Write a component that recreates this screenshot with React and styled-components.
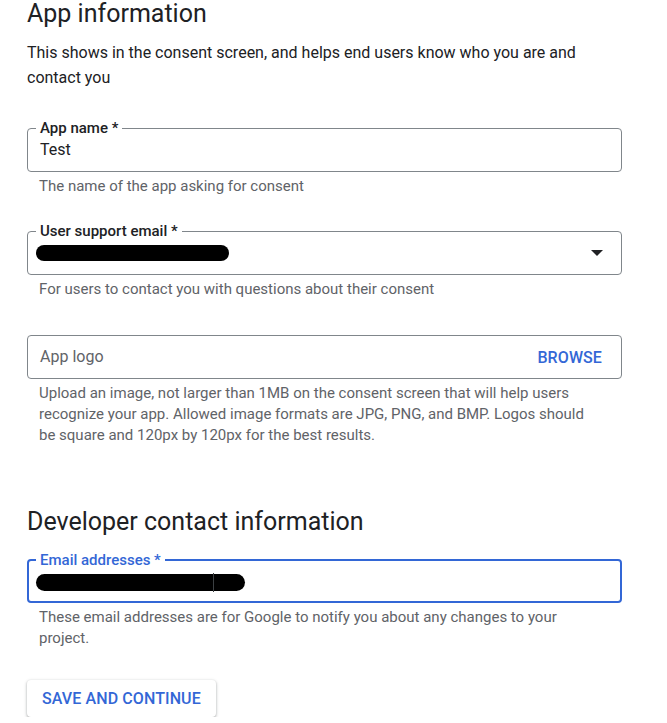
import React from 'react'
import styled, { createGlobalStyle } from 'styled-components'

const GlobalStyle = createGlobalStyle`
  html, body {
    margin: 0;
    padding: 0;
    background: #ffffff;
  }
  body {
    font-family: Roboto, 'Noto Sans', Arial, sans-serif;
    color: #202124;
  }
`;

const Page = styled.div`
  width: 595px;
  padding: 0 0 0 27px;
  display: flex;
  flex-direction: column;
`;

const Heading = styled.h2`
  margin: ${props => props.top || 0}px 0 0;
  font-size: 25px;
  line-height: 28px;
  font-weight: 400;
  color: #202124;
`;

const Intro = styled.p`
  margin: 12px 0 0;
  font-size: 16px;
  line-height: 25px;
  color: #202124;
  padding-right: 30px;
`;

const Field = styled.div`
  display: flex;
  flex-direction: column;
  margin-top: ${props => props.top}px;
`;

const Outline = styled.fieldset`
  margin: 0;
  min-width: 0;
  padding: 0 ${props => props.focused ? 11 : 12}px ${props => props.labeled ? (props.focused ? 5 : 7) : 0}px;
  border: ${props => props.focused ? '2px solid #3367d6' : '1px solid #80868b'};
  border-radius: 4px;
`;

const Label = styled.legend`
  padding: 0 4px;
  margin-left: -4px;
  font-size: 15px;
  line-height: 16px;
  font-weight: 500;
  color: ${props => props.focused ? '#3367d6' : '#202124'};
`;

const Row = styled.div`
  display: flex;
  align-items: center;
  justify-content: space-between;
  height: ${props => props.labeled ? 28 : 42}px;
`;

const Value = styled.span`
  font-size: 16px;
  line-height: 24px;
  color: ${props => props.placeholder ? '#5f6368' : '#202124'};
`;

const Redaction = styled.span`
  position: relative;
  display: inline-block;
  width: ${props => props.width}px;
  height: ${props => props.height || 16}px;
  margin-left: -4px;
  border-radius: 9px;
  background: #000000;
`;

const Caret = styled.span`
  position: absolute;
  left: ${props => props.left}px;
  top: -1px;
  width: 1px;
  height: 19px;
  background: #3c4043;
`;

const Arrow = styled.span`
  width: 0;
  height: 0;
  margin-right: 6px;
  border-left: 6px solid transparent;
  border-right: 6px solid transparent;
  border-top: 6px solid #202124;
`;

const Browse = styled.span`
  font-size: 16px;
  font-weight: 500;
  letter-spacing: 0.1px;
  color: #3367d6;
  margin-right: 7px;
`;

const Helper = styled.div`
  padding: 4px 30px 0 12px;
  font-size: 15px;
  line-height: 21px;
  color: #5f6368;
`;

const Actions = styled.div`
  display: flex;
  margin-top: 31px;
`;

const Button = styled.button`
  height: 37px;
  padding: 0 15px;
  border: none;
  border-radius: 4px;
  background: #ffffff;
  box-shadow: 0 1px 2px 0 rgba(60, 64, 67, 0.3), 0 1px 3px 1px rgba(60, 64, 67, 0.15);
  font-family: Roboto, Arial, sans-serif;
  font-size: 16px;
  font-weight: 500;
  letter-spacing: 0.1px;
  color: #3367d6;
  cursor: pointer;
`;

export default function App() {
  return (
    <>
      <GlobalStyle />
      <Page>
        <Heading>App information</Heading>
        <Intro>This shows in the consent screen, and helps end users know who you are and contact you</Intro>

        <Field top={30}>
          <Outline labeled>
            <Label>App name *</Label>
            <Row labeled>
              <Value>Test</Value>
            </Row>
          </Outline>
          <Helper>The name of the app asking for consent</Helper>
        </Field>

        <Field top={26}>
          <Outline labeled>
            <Label>User support email *</Label>
            <Row labeled>
              <Redaction width={193} />
              <Arrow />
            </Row>
          </Outline>
          <Helper>For users to contact you with questions about their consent</Helper>
        </Field>

        <Field top={35}>
          <Outline>
            <Row>
              <Value placeholder="true">App logo</Value>
              <Browse>BROWSE</Browse>
            </Row>
          </Outline>
          <Helper>
            Upload an image, not larger than 1MB on the consent screen that will help users recognize your app. Allowed image formats are JPG, PNG, and BMP. Logos should be square and 120px by 120px for the best results.
          </Helper>
        </Field>

        <Heading top={62}>Developer contact information</Heading>

        <Field top={16}>
          <Outline labeled focused>
            <Label focused>Email addresses *</Label>
            <Row labeled>
              <Redaction width={209} height={17}>
                <Caret left={177} />
              </Redaction>
            </Row>
          </Outline>
          <Helper>These email addresses are for Google to notify you about any changes to your project.</Helper>
        </Field>

        <Actions>
          <Button>SAVE AND CONTINUE</Button>
        </Actions>
      </Page>
    </>
  )
}
